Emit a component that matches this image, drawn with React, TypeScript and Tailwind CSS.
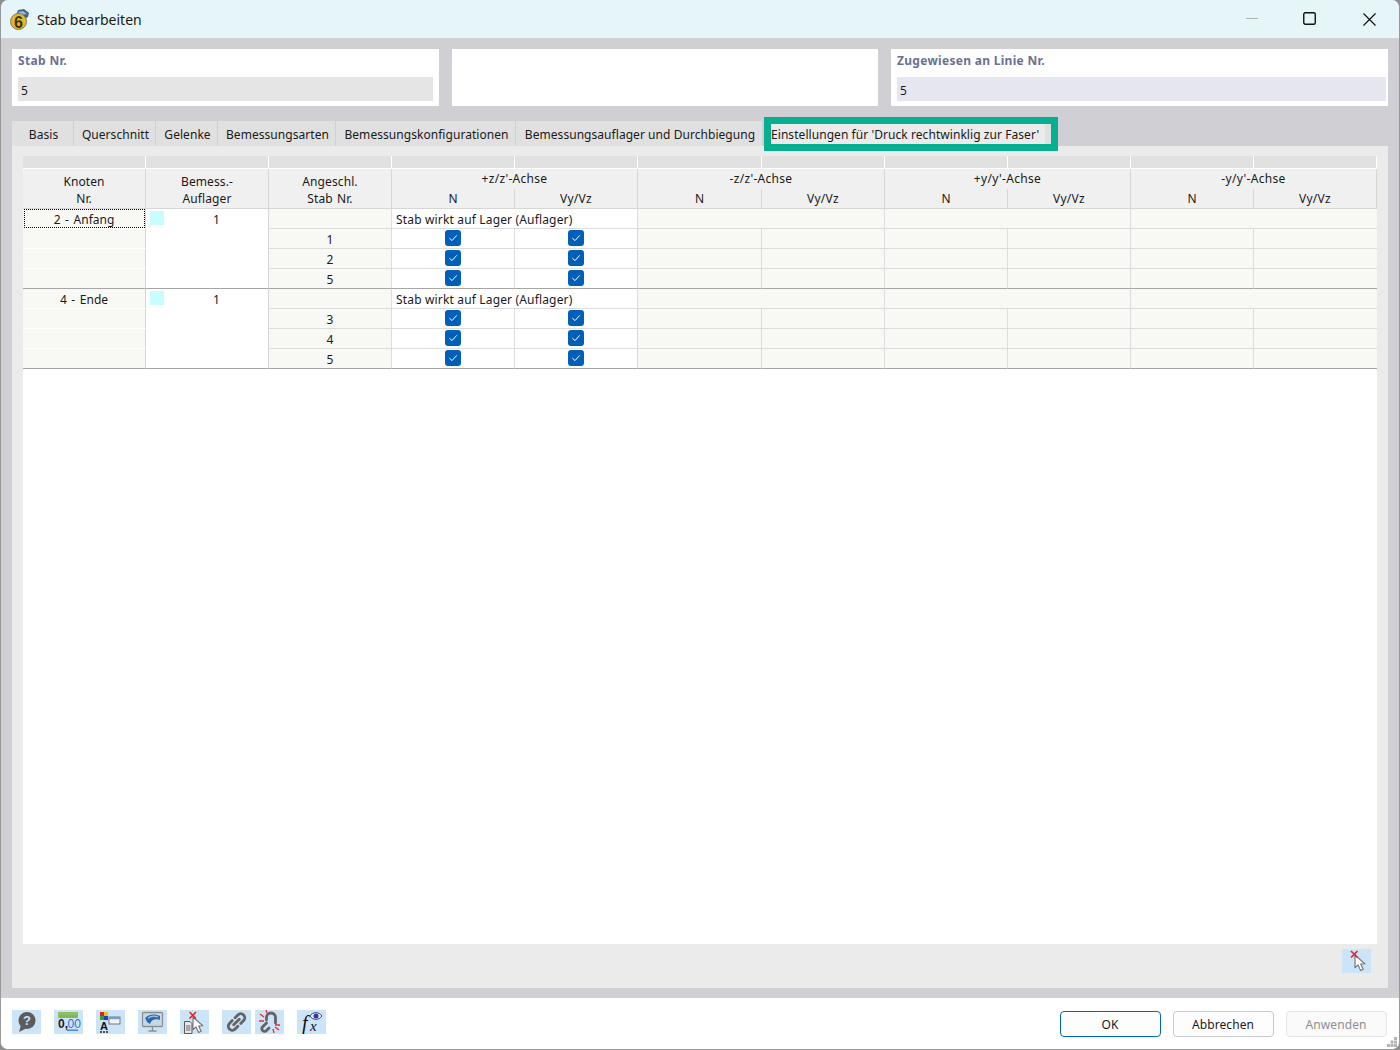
import React from "react";

const font = { fontFamily: '"Noto Sans", sans-serif' };
const cols = "grid grid-cols-[123px_123px_123px_123px_123px_124px_123px_123px_123px_123px_123px]";

function Ico({ children }: { children: React.ReactNode }) {
  return (
    <button className="w-[29px] h-6 bg-[#cce4f7] flex-none block">
      <svg width="29" height="24" viewBox="0 0 29 24">{children}</svg>
    </button>
  );
}

function Cursor({ x = 0, y = 0 }: { x?: number; y?: number }) {
  return (
    <path
      transform={`translate(${x} ${y}) scale(1.1)`}
      d="M0 0 L0 11.5 L2.8 9 L5 14 L7.4 13 L5.2 8.2 L9 8 Z"
      fill="#ffffff"
      stroke="#6e6e6e"
      strokeWidth="1"
      strokeLinejoin="round"
    />
  );
}

function RedX({ x, y }: { x: number; y: number }) {
  return (
    <path
      d={`M${x} ${y} l6.5 6.5 M${x + 6.5} ${y} l-6.5 6.5`}
      stroke="#e8202a"
      strokeWidth="1.6"
      fill="none"
    />
  );
}

function Check() {
  return (
    <span className="w-4 h-4 rounded-[3px] bg-[#0060b8] flex items-center justify-center">
      <svg width="10" height="10" viewBox="0 0 10 10">
        <path d="M1.4 5.2 L4 7.6 L8.7 2.4" stroke="#ffffff" strokeWidth="1" fill="none" />
      </svg>
    </span>
  );
}

const axes = ["+z/z'-Achse", "-z/z'-Achse", "+y/y'-Achse", "-y/y'-Achse"];

function Header() {
  const spans = Array.from({ length: 11 });
  return (
    <div className={`${cols} grid-rows-[13px_20px_20px] bg-[#f0f0f0] text-center`}>
      {spans.map((_, i) => (
        <div key={i} className="row-start-1 bg-[#e1e1e1] border-r border-b border-white" />
      ))}
      {[
        ["Knoten", "Nr."],
        ["Bemess.-", "Auflager"],
        ["Angeschl.", "Stab Nr."],
      ].map((l, i) => (
        <div
          key={l[0]}
          style={{ gridColumnStart: i + 1 }}
          className="row-start-2 row-span-2 border-r border-b border-[#d6d6d6] flex flex-col items-center pt-[4px] leading-[17px] tracking-[0.1px] [word-spacing:1px]"
        >
          <span>{l[0]}</span>
          <span>{l[1]}</span>
        </div>
      ))}
      {axes.map((a, i) => (
        <div key={a} className="col-span-2 row-start-2 border-r border-[#d6d6d6] leading-[19px] tracking-[0.3px]" style={{ gridColumnStart: 4 + i * 2 }}>
          {a}
        </div>
      ))}
      {axes.map((a, i) => (
        <React.Fragment key={a}>
          <div style={{ gridColumnStart: 4 + i * 2 }} className="row-start-3 border-r border-b border-[#d6d6d6] leading-[19px]">N</div>
          <div style={{ gridColumnStart: 5 + i * 2 }} className="row-start-3 border-r border-b border-[#d6d6d6] leading-[19px] tracking-[0.3px]">Vy/Vz</div>
        </React.Fragment>
      ))}
    </div>
  );
}

function Group({
  node,
  members,
  selected,
}: {
  node: string;
  members: string[];
  selected?: boolean;
}) {
  return (
    <div className={`${cols} auto-rows-[20px]`}>
      <div className="col-start-1 row-start-1 border-r border-r-[#d6d6d6] bg-[#f8f9f4] border-b border-b-white text-center relative">
        <span className="leading-[21px] [word-spacing:1.5px] block">{node}</span>
        {selected && (
          <span className="absolute left-px right-0 top-0 bottom-0 border border-dotted border-black" />
        )}
      </div>
      <div className="col-start-2 row-start-1 row-span-4 bg-white border-r border-r-[#d6d6d6] border-b border-b-[#a6a6a6] flex items-start">
        <span className="w-[14px] h-[14px] bg-[#c8fdff] ml-1 mt-[2px] flex-none" />
        <span className="flex-1 text-center leading-[21px] pl-px">1</span>
      </div>
      <div className="col-start-3 row-start-1 bg-[#f8f9f4] border-r border-b border-[#dcdcdc]" />
      <div className="col-start-4 col-span-2 row-start-1 bg-white border-r border-b border-[#dcdcdc] pl-1 leading-[21px] whitespace-nowrap tracking-[0.16px]">
        Stab wirkt auf Lager (Auflager)
      </div>
      <div className="col-start-6 col-span-2 row-start-1 bg-[#f8f9f4] border-r border-b border-[#dcdcdc]" />
      <div className="col-start-8 col-span-2 row-start-1 bg-[#f8f9f4] border-r border-b border-[#dcdcdc]" />
      <div className="col-start-10 col-span-2 row-start-1 bg-[#f8f9f4] border-b border-[#dcdcdc]" />

      {members.map((m, r) => {
        const last = r === members.length - 1;
        const b = last ? "border-b-[#a6a6a6]" : "border-b-[#dcdcdc]";
        const rowStyle = { gridRowStart: r + 2 };
        return (
          <React.Fragment key={m}>
            <div
              style={rowStyle}
              className={`col-start-1 bg-[#f8f9f4] border-r border-b border-r-[#d6d6d6] ${last ? "border-b-[#a6a6a6]" : "border-b-white"}`}
            />
            <div style={rowStyle} className={`col-start-3 bg-[#f8f9f4] border-r border-b border-r-[#dcdcdc] ${b} text-center leading-[22px]`}>
              {m}
            </div>
            <div style={rowStyle} className={`col-start-4 bg-white border-r border-b border-r-[#dcdcdc] ${b} flex items-start pt-px justify-center`}>
              <Check />
            </div>
            <div style={rowStyle} className={`col-start-5 bg-white border-r border-b border-r-[#d6d6d6] ${b} flex items-start pt-px justify-center`}>
              <Check />
            </div>
            {[6, 7, 8, 9, 10, 11].map((c) => (
              <div
                key={c}
                style={{ gridRowStart: r + 2, gridColumnStart: c }}
                className={`bg-[#f8f9f4] border-b ${b} ${c === 11 ? "" : "border-r border-r-[#dcdcdc]"}`}
              />
            ))}
          </React.Fragment>
        );
      })}
    </div>
  );
}

const tabs: [string, string][] = [
  ["Basis", "w-[61px]"],
  ["Querschnitt", "w-[81px]"],
  ["Gelenke", "w-[61px]"],
  ["Bemessungsarten", "w-[117px]"],
  ["Bemessungskonfigurationen", "w-[179px]"],
  ["Bemessungsauflager und Durchbiegung", "w-[246px]"],
];

function Footer() {
  return (
    <div className="h-[51px] flex-none bg-white flex pl-[11px] relative">
      <div className="flex mt-3 h-6">
        <Ico>
          <circle cx="15" cy="10.5" r="8.5" fill="#5c5c5c" />
          <path d="M9 15 L7 22 L15 18 Z" fill="#5c5c5c" />
          <text x="15" y="15" textAnchor="middle" fontSize="13" fontWeight="700" fill="#cce4f7" fontFamily="Liberation Sans">?</text>
        </Ico>
        <div className="w-[13px]" />
        <Ico>
          <rect x="4" y="2" width="20" height="6" fill="#8cc063" />
          <path d="M7 5v3M10 5v3M13 5v3M16 5v3M19 5v3M22 5v3" stroke="#5f9a3d" strokeWidth=".7" />
          <text x="4" y="18" fontSize="12" fontWeight="700" fill="#1c1c1c" fontFamily="Liberation Sans">0,</text>
          <text x="13.5" y="18" fontSize="12" fill="#2f6fd8" fontFamily="Liberation Sans">00</text>
          <rect x="13" y="19.5" width="11" height="1.4" fill="#3f7fe0" />
        </Ico>
        <div className="w-[13px]" />
        <Ico>
          <rect x="4" y="2" width="4" height="4" fill="#e02020" />
          <rect x="8" y="2" width="4" height="4" fill="#e8c020" />
          <rect x="4" y="6" width="4" height="4" fill="#30a030" />
          <rect x="8" y="6" width="4" height="4" fill="#2040c8" />
          <rect x="13" y="7" width="11" height="7" fill="#f4f4f4" stroke="#5a5a5a" strokeWidth=".8" />
          <rect x="13" y="7" width="11" height="2.2" fill="#6fa0d8" />
          <text x="4" y="20" fontSize="11" fontWeight="700" fill="#111" fontFamily="Liberation Sans">A</text>
          <path d="M4 22h2M7 22h2M10 22h2" stroke="#222" strokeWidth="1.4" />
        </Ico>
        <div className="w-[13px]" />
        <Ico>
          <rect x="4.5" y="2.5" width="20" height="14" rx="1" fill="#c9d8e6" stroke="#8a8f94" strokeWidth="1.3" />
          <path d="M7 8 C11 4 17 3.500 22 6 L22 10 C18 8 13 9.500 12 14 L9 12 Z" fill="#2f6aa8" />
          <path d="M10 8 C13.500 5.800 17 5.800 20 7" stroke="#a9c8e6" strokeWidth="1.100" fill="none" />
          <path d="M14.500 17v3.500M10.500 21h8" stroke="#8a8f94" strokeWidth="1.300" />
        </Ico>
        <div className="w-[13px]" />
        <Ico>
          <path d="M4.500 11.500h5.500l2 2v10h-7.500z" fill="#e8e8e8" stroke="#5a5a5a" />
          <path d="M6 16h4.500M6 18h4.500M6 20h4.500" stroke="#5a5a5a" strokeWidth=".9" />
          <Cursor x={13} y={7} />
          <RedX x={9.500} y={2} />
        </Ico>
        <div className="w-[13px]" />
        <Ico>
          <g fill="none" stroke="#636363" strokeWidth="2.800" strokeLinecap="round" transform="rotate(-45 14.500 12)">
            <path d="M12.500 8 H8.500 a4 4 0 0 0 0 8 H12.500" />
            <path d="M16.500 8 H20.500 a4 4 0 0 1 0 8 H16.500" />
            <path d="M10.500 12 H18.500" />
          </g>
        </Ico>
        <div className="w-1" />
        <Ico>
          <g fill="none" stroke="#636363" strokeWidth="2.800" strokeLinecap="round">
            <path d="M11.500 10 V7.500 a4.500 4.500 0 0 1 9 0 V13" />
            <path d="M11.500 13 L7.500 17 a2.500 2.500 0 0 0 4 3.500 L14 18" />
          </g>
          <path d="M5 4 l4 3 M4 11 h5 M11 0 l1 3 M25 15 h-5 M20 17 l4 3 M18 19 l1 4" stroke="#ee2a33" strokeWidth="1.300" fill="none" />
        </Ico>
        <div className="w-[13px]" />
        <Ico>
          <text x="5" y="20" fontSize="20" fontStyle="italic" fill="#111" fontFamily="Liberation Serif">f</text>
          <text x="13" y="21" fontSize="15" fontStyle="italic" fill="#111" fontFamily="Liberation Serif">x</text>
          <path d="M13 6 C15.500 1.500 22 1.500 25 6 C22 10.500 15.500 10.500 13 6 Z" fill="#e8eef6" stroke="#3a3f8a" strokeWidth="1" />
          <circle cx="19" cy="6" r="2.500" fill="#2b3ea0" />
        </Ico>
      </div>
      <div className="ml-auto mr-[12px] mt-[13px] flex gap-3 h-[26px]">
        <button className="w-[101px] rounded-[4px] border border-[#0067c0] bg-[#fdfdfd] text-[#1a1a1a] pt-px pr-px tracking-[0.1px]">OK</button>
        <button className="w-[101px] rounded-[4px] border border-[#c8c8c8] bg-[#fdfdfd] text-[#1a1a1a] pt-px pr-px tracking-[0.1px]">Abbrechen</button>
        <button className="w-[101px] rounded-[4px] border border-[#e6e6e6] bg-[#fafafa] text-[#8f8f8f] pt-px pr-px tracking-[0.1px]">Anwenden</button>
      </div>
      <svg className="absolute right-[2px] bottom-[2px]" width="10" height="10" viewBox="0 0 10 10">
        <path d="M7 0h3v3H7zM3.500 3.500h3v3h-3zM7 3.500h3v3H7zM0 7h3v3H0zM3.500 7h3v3h-3zM7 7h3v3H7z" fill="#b4b4b4" />
      </svg>
    </div>
  );
}

export default function App() {
  return (
    <div className="w-[1400px] h-[1050px] bg-[#8e8e8e] overflow-hidden" style={font}>
      <div className="w-[1400px] h-[1050px] rounded-[8px] overflow-hidden flex flex-col text-[12px] text-[#1a1a1a] border-l border-b border-r border-[#9a9a9a] bg-[#d0d0d4]">
        <div className="h-[38px] flex-none bg-[#e6f5f8] flex items-center relative">
          <svg className="ml-2 flex-none" width="21" height="22" viewBox="0 0 21 22">
            <path d="M7 7 L9 2 L15 1 L20 5 L19 9 L14 12 L8 10 Z" fill="#3f6690" />
            <path d="M9 4 L14 3 L18 6 L12 7 Z" fill="#9ab8d4" />
            <circle cx="9.500" cy="13.500" r="8" fill="#e9b81f" stroke="#7f7a5e" strokeWidth="1" />
            <text x="9.500" y="19.500" textAnchor="middle" fontSize="16" fontWeight="700" fill="#33332b" fontFamily="Liberation Sans">6</text>
          </svg>
          <span className="ml-[7px] text-[14px] text-[#1a1a1a]">Stab bearbeiten</span>
          <svg className="absolute left-[1245px] top-[18px]" width="12" height="2" viewBox="0 0 12 2">
            <rect width="12" height="1" fill="#b4b4b4" />
          </svg>
          <svg className="absolute left-[1302px] top-[12px]" width="13" height="13" viewBox="0 0 13 13">
            <rect x=".75" y=".75" width="11.500" height="11.500" rx="1.500" fill="none" stroke="#111" strokeWidth="1.400" />
          </svg>
          <svg className="absolute left-[1362px] top-[13px]" width="13" height="13" viewBox="0 0 13 13">
            <path d="M.5 .5 L12.500 12.500 M12.500 .5 L.5 12.500" stroke="#111" strokeWidth="1.200" />
          </svg>
        </div>

        <div className="flex-1 min-h-0 flex flex-col px-[11px] pt-[11px] pb-[10px]">
          <div className="flex h-[57px] flex-none">
            <div className="w-[427px] bg-white px-[6px]">
              <div className="h-[28px] leading-[23px] font-bold text-[#6b7092] tracking-[0.35px]">Stab Nr.</div>
              <div className="h-6 bg-[#e5e5e5] pl-[3px] leading-[27px]">5</div>
            </div>
            <div className="w-[426px] bg-white ml-[13px]" />
            <div className="w-[497px] bg-white ml-[13px] pl-[6px] pr-[2px]">
              <div className="h-[28px] leading-[23px] font-bold text-[#6b7092] tracking-[0.3px]">Zugewiesen an Linie Nr.</div>
              <div className="h-6 bg-[#e6e6f0] pl-[3px] leading-[27px]">5</div>
            </div>
          </div>

          <div className="flex h-[25px] mt-[15px] flex-none">
            {tabs.map(([t, w]) => (
              <div key={t} className={`${w} mr-px bg-[#e0e0e0] flex items-center justify-center whitespace-nowrap tracking-[0.05px] pl-[2px] pt-[2px]`}>
                {t}
              </div>
            ))}
            <div className="w-[294px] h-[34px] -mt-1 ml-px border-[7px] border-[#07ae8f] bg-[#e0e0e0] z-10 flex-none">
              <div className="w-[274px] h-5 bg-[#ebebeb] whitespace-nowrap leading-[21px] tracking-[0.06px]">
                Einstellungen für 'Druck rechtwinklig zur Faser'
              </div>
            </div>
          </div>

          <div className="flex-1 min-h-0 bg-[#ebebeb] flex flex-col px-[11px] pt-[10px]">
            <div className="h-[788px] flex-none bg-white overflow-hidden">
              <Header />
              <Group node="2 - Anfang" members={["1", "2", "5"]} selected />
              <Group node="4 - Ende" members={["3", "4", "5"]} />
            </div>
            <div className="flex justify-end mt-[5px] mr-[6px]">
              <Ico>
                <Cursor x={13} y={6} />
                <RedX x={9} y={2} />
              </Ico>
            </div>
          </div>
        </div>

        <Footer />
      </div>
    </div>
  );
}
